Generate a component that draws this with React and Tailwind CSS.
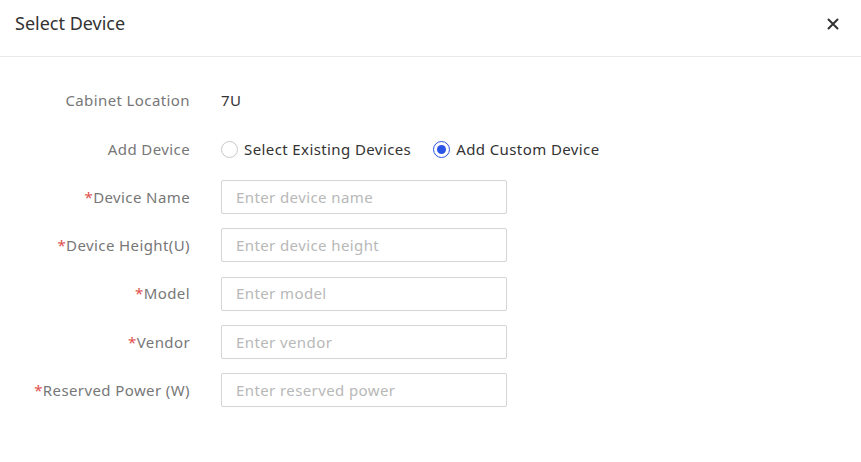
import React from "react";

const fields = [
  { label: "Device Name", ph: "Enter device name" },
  { label: "Device Height(U)", ph: "Enter device height" },
  { label: "Model", ph: "Enter model" },
  { label: "Vendor", ph: "Enter vendor" },
  { label: "Reserved Power (W)", ph: "Enter reserved power" },
];

export default function App() {
  return (
    <div
      className="w-[861px] h-[462px] bg-white text-[#333]"
      style={{ fontFamily: '"Noto Sans", "Open Sans", sans-serif' }}
    >
      <div className="h-[57px] border-b border-[#e8e8e8] flex items-center justify-between pl-[15px] pr-[22px] pb-[9px]">
        <div className="text-[18px] text-[#333]">Select Device</div>
        <svg width="12" height="12" viewBox="0 0 12 12" className="text-[#333]">
          <path d="M1.5 1.5 L10.5 10.5 M10.5 1.5 L1.5 10.5" stroke="currentColor" strokeWidth="2" strokeLinecap="round" />
        </svg>
      </div>
      <div className="pt-[30px] flex flex-col text-[15px] tracking-[0.4px]">
        <div className="flex items-center h-[26px] mb-[23px]">
          <div className="w-[190px] text-right text-[#777]">Cabinet Location</div>
          <div className="ml-[31px] text-[#333]">7U</div>
        </div>
        <div className="flex items-center h-[26px] mb-[18px]">
          <div className="w-[190px] text-right text-[#777]">Add Device</div>
          <div className="ml-[31px] flex items-center">
            <span className="w-[17px] h-[17px] rounded-full border border-[#c8c8c8] bg-white"></span>
            <span className="ml-[6px] text-[#333]">Select Existing Devices</span>
            <span className="ml-[22px] w-[17px] h-[17px] rounded-full border-[1.5px] border-[#2b55e6] flex items-center justify-center">
              <span className="w-[9px] h-[9px] rounded-full bg-[#2b55e6]"></span>
            </span>
            <span className="ml-[6px] text-[#333]">Add Custom Device</span>
          </div>
        </div>
        <div className="flex flex-col gap-[14.3px]">
          {fields.map((f) => (
            <div key={f.label} className="flex items-center h-[34px]">
              <div className="w-[190px] text-right text-[#777]">
                <span className="text-[#e0504d]">*</span>
                {f.label}
              </div>
              <div className="ml-[31px] w-[286px] h-[34px] border border-[#d4d4d4] rounded-[2px] flex items-center px-[14px] text-[#b8b8b8]">
                {f.ph}
              </div>
            </div>
          ))}
        </div>
      </div>
    </div>
  );
}
